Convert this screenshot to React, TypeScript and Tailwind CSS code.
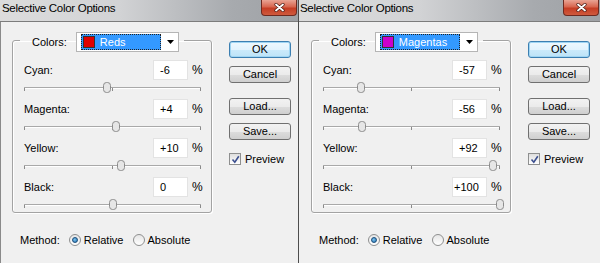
import React from "react";

type Adjust = { label: string; value: string; n: number };

type DialogProps = {
  first?: boolean;
  colorName: string;
  swatch: string;
  rows: Adjust[];
};

const btn =
  "h-[17px] w-[62px] rounded-[3px] border border-[#707070] bg-[linear-gradient(#f2f2f2,#ebebeb_50%,#dddddd_51%,#cfcfcf)] text-[11px] leading-none text-black";

const okBtn =
  "h-[17px] w-[62px] rounded-[3px] border border-[#3c7fb1] bg-[linear-gradient(#eef8fe,#e2f3fd_50%,#cbeafb_51%,#bde3f7)] shadow-[inset_0_0_0_1px_#9fd5f3] text-[11px] leading-none text-black";

function Slider({ n }: { n: number }) {
  const start = 4;
  const len = 177;
  const x = start + ((n + 100) / 200) * len;
  return (
    <svg width="186" height="14" className="ml-[7px] block">
      <line x1={start} y1="7.5" x2={start + len} y2="7.5" stroke="#a9a9a9" />
      <line x1={start} y1="8.5" x2={start + len} y2="8.5" stroke="#ffffff" />
      <line x1={start + 0.5} y1="8" x2={start + 0.5} y2="11" stroke="#8a8a8a" />
      <line x1={start + len / 2} y1="8" x2={start + len / 2} y2="11" stroke="#8a8a8a" />
      <line x1={start + len - 0.5} y1="8" x2={start + len - 0.5} y2="11" stroke="#8a8a8a" />
      <rect x={Math.round(x) - 3.5} y="2.5" width="7" height="10" rx="3" fill="#e6e6e6" stroke="#8c8c8c" />
    </svg>
  );
}

function Radio({ on, label }: { on?: boolean; label: string }) {
  return (
    <div className="flex items-center gap-[3px]">
      <span className="flex h-[12px] w-[12px] items-center justify-center rounded-full border border-[#8e8f8f] bg-[linear-gradient(#e6e6e6,#ffffff)]">
        {on && (
          <span className="h-[6px] w-[6px] rounded-full border border-[#1c4f7c] bg-[radial-gradient(circle_at_40%_40%,#7fc4ee,#1f6fb0)]" />
        )}
      </span>
      <span>{label}</span>
    </div>
  );
}

function Dialog({ first, colorName, swatch, rows }: DialogProps) {
  return (
    <div className={`flex h-[263px] flex-col ${first ? "w-[299px] border-r border-[#4d4d4d]" : "w-[301px]"}`}>
      {/* title bar */}
      <div
        className={`flex h-[22px] shrink-0 items-start justify-between border-b border-[#7c7c7c] bg-[linear-gradient(to_right,#dcdcdc,#d2d3d5_40%,#a7aaae_78%,#9ea1a5)] ${first ? "pl-[2px]" : "pl-[1px]"}`}
      >
        <span className="pt-[3px] text-[11.5px] tracking-[-0.3px] text-black">Selective Color Options</span>
        <div className="mr-[1px] flex h-[16px] w-[36px] items-center justify-center rounded-b-[4px] border border-t-0 border-[#6e2a20] bg-[linear-gradient(#e9a494,#d8664f_45%,#c53d24_55%,#cf5a3e)]">
          <svg width="11" height="9" viewBox="0 0 11 9">
            <path d="M2 1.5 L9 7.5 M9 1.5 L2 7.5" stroke="#4a1a12" strokeWidth="3.2" strokeLinecap="round" />
            <path d="M2 1.5 L9 7.5 M9 1.5 L2 7.5" stroke="#ffffff" strokeWidth="1.8" strokeLinecap="round" />
          </svg>
        </div>
      </div>

      <div className={`flex flex-1 flex-col bg-[#f0f0f0] pt-[6px] ${first ? "border-l border-[#8a8a8a]" : ""}`}>
        <div className="flex items-start">
          <fieldset className={`w-[200px] rounded-[3px] border border-[#a3a3a3] pb-[1px] shadow-[inset_1px_1px_0_#ffffff,1px_1px_0_#ffffff] ${first ? "ml-[11px]" : "ml-[12px]"}`}>
            <legend className="ml-[7px] flex items-center pl-[12px] pr-[5px] pt-[4px]">
              <span className="mr-[9px]">Colors:</span>
              <div className="flex h-[20px] w-[103px] items-center border border-[#b5b5b5] bg-white">
                <div className="ml-[4px] flex h-[16px] w-[80px] items-center border border-dotted border-[#222] bg-[#3399ff] pl-[1px]">
                  <span className="h-[12px] w-[12px] border border-[#333]" style={{ backgroundColor: swatch }} />
                  <span className="ml-[5px] text-white">{colorName}</span>
                </div>
                <svg width="7" height="4" className="ml-[6px]">
                  <path d="M0 0 H7 L3.5 4 Z" fill="#000" />
                </svg>
              </div>
            </legend>
            <div className="mt-[8px] flex flex-col gap-[5px]">
              {rows.map((r) => (
                <div key={r.label} className="flex flex-col">
                  <div className="flex h-[20px] items-center pl-[11px] pr-[9px]">
                    <span className="flex-1">{r.label}</span>
                    <div
                      className={`flex h-[20px] w-[35px] items-center overflow-hidden border border-[#e3e3e3] bg-white ${r.value.length > 3 ? "pl-[1px]" : "pl-[6px]"}`}
                    >
                      {r.value}
                    </div>
                    <span className="ml-[4px] w-[10px] text-[12px]">%</span>
                  </div>
                  <Slider n={r.n} />
                </div>
              ))}
            </div>
          </fieldset>

          <div className="ml-[17px] mt-[13px] flex flex-col">
            <button className={okBtn}>OK</button>
            <button className={`${btn} mt-[8px]`}>Cancel</button>
            <button className={`${btn} mt-[15px]`}>Load...</button>
            <button className={`${btn} mt-[8px]`}>Save...</button>
            <div className="mt-[13px] flex items-center gap-[4px]">
              <span className="flex h-[12px] w-[12px] items-center justify-center border border-[#8e8f8f] bg-[linear-gradient(#dedede,#ffffff)]">
                <svg width="9" height="9" viewBox="0 0 9 9">
                  <path d="M1.5 4.5 L3.8 7.2 L7.8 1.2" fill="none" stroke="#3b4f8f" strokeWidth="1.6" />
                </svg>
              </span>
              <span>Preview</span>
            </div>
          </div>
        </div>

        <div className={`mt-[21px] flex items-center gap-[9px] ${first ? "pl-[19px]" : "pl-[20px]"}`}>
          <span>Method:</span>
          <Radio on label="Relative" />
          <Radio label="Absolute" />
        </div>
      </div>
    </div>
  );
}

export default function App() {
  return (
    <div className="flex h-[263px] w-[600px] overflow-hidden bg-[#f0f0f0] font-['Liberation_Sans',Arial,sans-serif] text-[11px] leading-none text-black">
      <Dialog
        first
        colorName="Reds"
        swatch="#e00000"
        rows={[
          { label: "Cyan:", value: "-6", n: -6 },
          { label: "Magenta:", value: "+4", n: 4 },
          { label: "Yellow:", value: "+10", n: 10 },
          { label: "Black:", value: "0", n: 0 },
        ]}
      />
      <Dialog
        colorName="Magentas"
        swatch="#cc00cc"
        rows={[
          { label: "Cyan:", value: "-57", n: -57 },
          { label: "Magenta:", value: "-56", n: -56 },
          { label: "Yellow:", value: "+92", n: 92 },
          { label: "Black:", value: "+100", n: 100 },
        ]}
      />
    </div>
  );
}
